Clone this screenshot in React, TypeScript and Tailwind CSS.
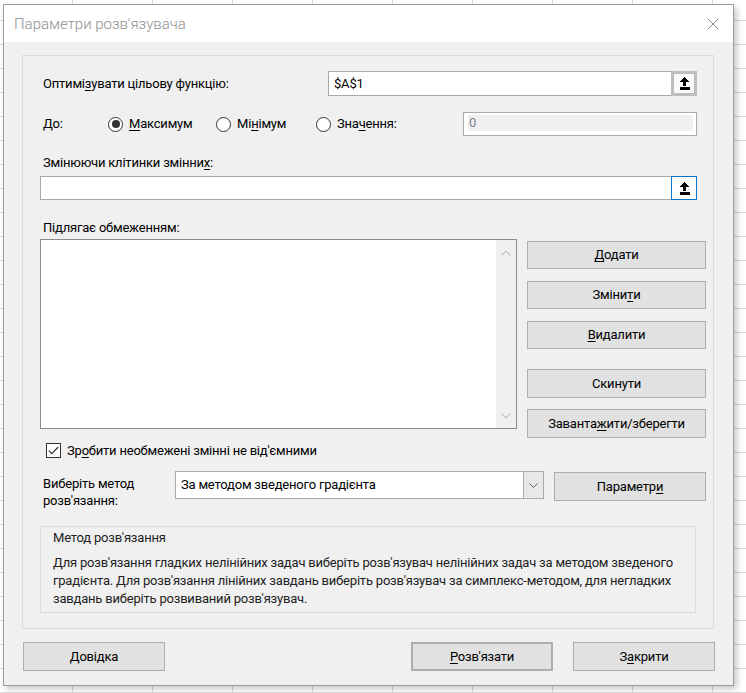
import React from "react";

const COLS = [72, 152, 232, 312, 392, 472, 552, 632, 712];
const ROWS = Array.from({ length: 29 }, (_, i) => 20 + i * 24);

function SheetGrid() {
  return (
    <svg className="absolute left-0 top-0" width="746" height="693" shapeRendering="crispEdges">
      {COLS.map((x) => (
        <line key={"c" + x} x1={x + 0.5} y1={0} x2={x + 0.5} y2={693} stroke="#dadada" strokeWidth={1} />
      ))}
      {ROWS.map((y) => (
        <line key={"r" + y} x1={0} y1={y + 0.5} x2={746} y2={y + 0.5} stroke="#dadada" strokeWidth={1} />
      ))}
    </svg>
  );
}

function U({ children }: { children: React.ReactNode }) {
  return <span className="underline decoration-1 underline-offset-[2px]">{children}</span>;
}

function RefIcon() {
  return (
    <svg width="11" height="13" viewBox="0 0 11 13" shapeRendering="crispEdges">
      <path d="M5.5 0 L10.5 5 L7 5 L7 9 L4 9 L4 5 L0.5 5 Z" fill="#000" />
      <rect x="0.5" y="10" width="10" height="2.5" fill="#000" />
    </svg>
  );
}

function Chevron({ up }: { up?: boolean }) {
  return (
    <svg width="10" height="6" viewBox="0 0 10 6">
      <path d={up ? "M0.5 5.5 L5 1 L9.5 5.5" : "M0.5 0.5 L5 5 L9.5 0.5"} fill="none" stroke="#c2c2c2" strokeWidth="1.2" />
    </svg>
  );
}

function Radio({ checked, children }: { checked?: boolean; children: React.ReactNode }) {
  return (
    <div className="flex items-center">
      <span className="flex h-[15px] w-[15px] items-center justify-center rounded-full border border-[#333333] bg-white">
        {checked && <span className="h-[8px] w-[8px] rounded-full bg-[#333333]" />}
      </span>
      <span className="ml-[6px]">{children}</span>
    </div>
  );
}

function Btn({ children, className }: { children: React.ReactNode; className?: string }) {
  return (
    <div
      className={
        "flex items-center justify-center border border-[#adadad] bg-[#e1e1e1] text-black " + (className ?? "")
      }
    >
      {children}
    </div>
  );
}

export default function App() {
  return (
    <div className="relative h-[693px] w-[746px] overflow-hidden bg-white font-['Roboto','Noto_Sans',sans-serif] text-[13px] leading-[20px] tracking-[-0.2px] text-black">
      <SheetGrid />

      {/* Solver dialog window */}
      <div className="absolute left-[3px] top-[4px] flex h-[682px] w-[731px] flex-col border border-[#9c9c9c] bg-[#f0f0f0] shadow-[3px_3px_6px_rgba(0,0,0,0.22)]">
        {/* title bar */}
        <div className="flex h-[37px] shrink-0 items-center justify-between bg-white pl-[10px] pr-[14px]">
          <span className="text-[15px] font-light tracking-normal text-[#8e8e8e]">Параметри розв'язувача</span>
          <svg width="12" height="12" viewBox="0 0 12 12">
            <path d="M0.5 0.5 L11.5 11.5 M11.5 0.5 L0.5 11.5" stroke="#8a8a8a" strokeWidth="1" />
          </svg>
        </div>

        {/* main group */}
        <div className="ml-[18px] mt-[13px] flex h-[574px] w-[692px] shrink-0 flex-col border border-[#dcdcdc] pl-[17px] pt-[15px]">
          {/* objective */}
          <div className="flex h-[25px] items-center">
            <div className="w-[288px] pl-[3px]">
              Оптимі<U>з</U>увати цільову функцію:
            </div>
            <div className="flex h-[25px] w-[369px] border border-[#a9a9a9] bg-white">
              <div className="flex flex-1 items-center pl-[5px]">$A$1</div>
              <div className="-my-px -mr-px flex h-[25px] w-[26px] items-center justify-center border-[3px] border-[#bdbdbd] bg-[#f9f9f9]">
                <RefIcon />
              </div>
            </div>
          </div>

          {/* to */}
          <div className="mt-[16px] flex h-[24px] items-center">
            <div className="w-[68px] pl-[3px]">До:</div>
            <div className="w-[108px]">
              <Radio checked>
                <U>М</U>аксимум
              </Radio>
            </div>
            <div className="w-[100px]">
              <Radio>
                Мі<U>н</U>імум
              </Radio>
            </div>
            <div className="w-[147px]">
              <Radio>
                Зна<U>ч</U>ення:
              </Radio>
            </div>
            <div className="flex h-[24px] w-[234px] border border-[#a9a9a9] bg-white pb-[4px] pl-[4px] pr-[3px] pt-[2px]">
              <div className="flex flex-1 items-center bg-[#f0f0f0] pl-[1px] text-[#7d8590]">0</div>
            </div>
          </div>

          {/* changing cells */}
          <div className="mt-[17px] pl-[3px]">
            Змінюючи клітинки змінни<U>х</U>:
          </div>
          <div className="mt-[3px] flex h-[24px] w-[657px] border border-[#a9a9a9] bg-white">
            <div className="flex-1" />
            <div className="-my-px -mr-px flex h-[24px] w-[26px] items-center justify-center border border-[#0078d7] bg-white">
              <RefIcon />
            </div>
          </div>

          {/* constraints */}
          <div className="mt-[18px] pl-[3px]">Підлягає обмеженням:</div>
          <div className="mt-[1px] flex h-[190px] items-start gap-[10px]">
            <div className="flex h-[190px] w-[477px] justify-end border border-[#8c8c8c] bg-white">
              <div className="flex w-[20px] flex-col items-center justify-between bg-[#f0f0f0] pb-[9px] pt-[10px]">
                <Chevron up />
                <Chevron />
              </div>
            </div>
            <div className="flex w-[179px] flex-col pt-[2px]">
              <Btn className="h-[28px]">
                <span>
                  <U>Д</U>одати
                </span>
              </Btn>
              <Btn className="mt-[12px] h-[28px]">
                <span>
                  Зміни<U>т</U>и
                </span>
              </Btn>
              <Btn className="mt-[12px] h-[28px]">
                <span>
                  <U>В</U>идалити
                </span>
              </Btn>
              <Btn className="mt-[20px] h-[29px]">Скинути</Btn>
              <Btn className="mt-[11px] h-[29px]">
                <span>
                  Заванта<U>ж</U>ити/зберегти
                </span>
              </Btn>
            </div>
          </div>

          {/* non-negative checkbox */}
          <div className="mt-[14px] flex h-[15px] items-center pl-[6px]">
            <span className="flex h-[15px] w-[15px] items-center justify-center border border-[#333333] bg-white">
              <svg width="11" height="9" viewBox="0 0 11 9">
                <path d="M0.8 4.6 L3.8 7.6 L10.2 1" fill="none" stroke="#333333" strokeWidth="1.2" />
              </svg>
            </span>
            <span className="ml-[6px]">
              Зр<U>о</U>бити необмежені змінні не від'ємними
            </span>
          </div>

          {/* solving method */}
          <div className="mt-[13px] flex h-[28px] items-start">
            <div className="w-[135px] pl-[3px] pt-[4px] leading-[17px]">
              Виберіть метод
              <br />
              розв'язання:
            </div>
            <div className="flex h-[28px] w-[369px] border border-[#a9a9a9] bg-white">
              <div className="flex flex-1 items-center pl-[5px]">За методом зведеного градієнта</div>
              <div className="flex w-[20px] items-center justify-center border-l border-[#a9a9a9] bg-[#e8e8e8]">
                <svg width="9" height="5" viewBox="0 0 9 5">
                  <path d="M0.5 0.5 L4.5 4.5 L8.5 0.5" fill="none" stroke="#606060" strokeWidth="1" />
                </svg>
              </div>
            </div>
            <Btn className="ml-[10px] mt-[1px] h-[29px] w-[152px]">
              <span>
                Параметр<U>и</U>
              </span>
            </Btn>
          </div>

          {/* method description */}
          <div className="mt-[27px] h-[87px] w-[656px] border border-[#dcdcdc] px-[12px] pt-[1px] text-[#222222]">
            <div>Метод розв'язання</div>
            <div className="mt-[6px] whitespace-nowrap leading-[18px]">
              Для розв'язання гладких нелінійних задач виберіть розв'язувач нелінійних задач за методом зведеного
              <br />
              градієнта. Для розв'язання лінійних завдань виберіть розв'язувач за симплекс-методом, для негладких
              <br />
              завдань виберіть розвиваний розв'язувач.
            </div>
          </div>
        </div>

        {/* footer buttons */}
        <div className="mt-[13px] flex pl-[19px] pr-[18px]">
          <Btn className="h-[29px] w-[142px]">
            <span>
              Дові<U>д</U>ка
            </span>
          </Btn>
          <Btn className="ml-auto h-[29px] w-[142px] border-2 border-[#0078d7]">
            <span>
              <U>Р</U>озв'язати
            </span>
          </Btn>
          <Btn className="ml-[20px] h-[29px] w-[142px]">
            <span>
              З<U>а</U>крити
            </span>
          </Btn>
        </div>
      </div>
    </div>
  );
}
